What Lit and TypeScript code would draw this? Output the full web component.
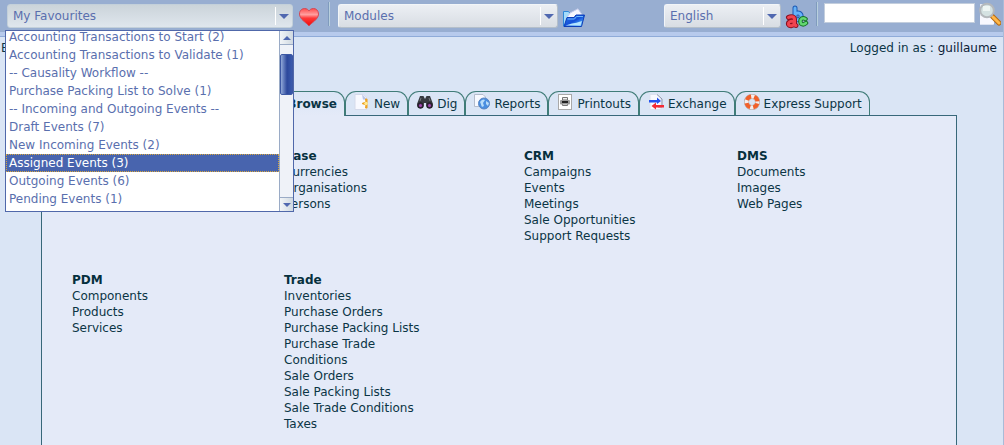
import { LitElement, html, css, svg } from "lit";
import { customElement, state } from "lit/decorators.js";
import { classMap } from "lit/directives/class-map.js";

const heart = svg`<svg width="22" height="20" viewBox="0 0 22 20"><defs><linearGradient id="hg" x1="0" y1="0" x2="0" y2="1"><stop offset="0" stop-color="#ff4a4a"/><stop offset=".35" stop-color="#ffa0a0"/><stop offset=".55" stop-color="#ff3838"/><stop offset="1" stop-color="#f00808"/></linearGradient></defs><path d="M11 19C9 16 1.500 12.500 1.500 7C1.500 3 4.500 1.500 6.500 1.500C9 1.500 10.500 3 11 4C11.500 3 13 1.500 15.500 1.500C18 1.500 20.500 3.500 20.500 7C20.500 12.500 13 16 11 19Z" fill="url(#hg)" stroke="#d04a58"/></svg>`;

const folder = svg`<svg width="24" height="20" viewBox="0 0 24 20"><defs><linearGradient id="fg" x1="0" y1="0" x2="1" y2="1"><stop offset="0" stop-color="#2a78ec"/><stop offset=".5" stop-color="#1450d8"/><stop offset=".75" stop-color="#3f96f4"/><stop offset="1" stop-color="#9adcff"/></linearGradient></defs><path d="M1.500 18V3.500H6.500L8 5.500V18Z" fill="#a4dcfa" stroke="#2f88d8"/><path d="M4 11L8 5L16 .8L21 8L18 13Z" fill="#f7f8ff" stroke="#c4cbea"/><path d="M2 18.500L5 9.500H12L14 7H22.500L19.500 18.500Z" fill="url(#fg)" stroke="#0b3eb8"/><path d="M5.500 11H12.500L14.500 8.500H21" stroke="#6cb8ff" fill="none"/><path d="M3.500 17.500H18.500L20 13Q14 15 10 15.500Z" fill="#b4e4ff"/></svg>`;

const abc = svg`<svg width="24" height="24" viewBox="0 0 24 24" fill="none"><g stroke-linecap="round" stroke-linejoin="round"><path d="M10 3V14M10 9C14 6.500 16.500 9 16 12C15.500 15 12 15.500 10 14" stroke="#1e5ab4" stroke-width="5"/><path d="M10 3V14M10 9C14 6.500 16.500 9 16 12C15.500 15 12 15.500 10 14" stroke="#65b2f8" stroke-width="3"/><path d="M3.500 12.500C6 11 9.500 11.500 9.500 14.500V20L11 20.500M9 16.500C5 15.500 3 17.500 3.500 19.500C4.500 21.500 8 21 9 19" stroke="#8c1020" stroke-width="5"/><path d="M3.500 12.500C6 11 9.500 11.500 9.500 14.500V20L11 20.500M9 16.500C5 15.500 3 17.500 3.500 19.500C4.500 21.500 8 21 9 19" stroke="#f04450" stroke-width="3"/><path d="M20.500 14C17.500 12 15 14 15.500 17C16 20 19 20 21 18" stroke="#187028" stroke-width="4.500"/><path d="M20.500 14C17.500 12 15 14 15.500 17C16 20 19 20 21 18" stroke="#63d870" stroke-width="2.500"/></g></svg>`;

const lens = svg`<svg width="24" height="24" viewBox="0 0 24 24"><path d="M3 2H13L16 5V22.500H3Z" fill="#e6e9f2"/><path d="M3 14H17V22.500H3Z" fill="#f8f8fe"/><path d="M15.500 14.500L22 21" stroke="#b86a10" stroke-width="5" stroke-linecap="round"/><path d="M16 15L22 21" stroke="#ffb84a" stroke-width="3" stroke-linecap="round"/><circle cx="10" cy="8.500" r="6.800" fill="#d5e2e2" stroke="#b4b8bc" stroke-width="2"/><path d="M6 4H13V9H6Z" fill="#eef5f3"/></svg>`;

const newDoc = svg`<svg width="16" height="16" viewBox="0 0 16 16"><path d="M1 .5H9L13 4V15.500H1Z" fill="#f8f9ff" stroke="#d5daea"/><path d="M8 .5L13 5.500H9Z" fill="#b8c4e6"/><path d="M13 5V14H11.500L12 11L8 9.500L12 8L11.500 5Z" fill="#eda224" stroke="#eda224"/><circle cx="12" cy="9.500" r="1.800" fill="#ffe890"/></svg>`;
const dig = svg`<svg width="16" height="16" viewBox="0 0 16 16"><path d="M3 2H6.500L8 5L9.500 2H13L16 10L15 14H10L9 9H7L6 14H1L0 10Z" fill="#383a40"/><path d="M4 4L3 7M12 4L13 7" stroke="#75787e"/><circle cx="3.500" cy="11.500" r="2.800" fill="#38203f" stroke="#202024"/><circle cx="12.500" cy="11.500" r="2.800" fill="#38203f" stroke="#202024"/><circle cx="3.500" cy="11.500" r="1.500" fill="#a04cb0"/><circle cx="12.500" cy="11.500" r="1.500" fill="#a04cb0"/></svg>`;
const reports = svg`<svg width="16" height="16" viewBox="0 0 16 16"><path d="M.5 .5H9L11.500 3V12.500H.5Z" fill="#f7f9ff" stroke="#b4bccc"/><circle cx="10" cy="9.500" r="5.500" fill="#4a8ee0" stroke="#5a86c4"/><path d="M6 8C8 5 10 5 11 6L9 9L10 12L8 13C7 11 7 10 6 8ZM12 7L15 9L14 12L12 10Z" fill="#b8dcfa"/></svg>`;
const printer = svg`<svg width="16" height="16" viewBox="0 0 16 16"><rect x="1.500" y=".5" width="13" height="15" fill="#fff" stroke="#a9a9a9"/><path d="M5.500 3.500H10.500V6H5.500ZM5.500 9.500H10.500V11.500H5.500Z" fill="#eee" stroke="#777"/><rect x="3" y="6" width="10" height="4.500" rx="1" fill="#999"/><path d="M5 8H11" stroke="#222" stroke-width="2"/></svg>`;
const exchange = svg`<svg width="16" height="16" viewBox="0 0 16 16"><path d="M2 .5H10L13 3.500V15.500H2Z" fill="#f8f9ff" stroke="#dde1ee"/><path d="M9 .5L14 5V13H10" fill="none" stroke="#8d96ac"/><path d="M1 6H9V3.500L13 7L9 10V8.500H1Z" fill="#2452f0"/><path d="M16 11H8V8.500L3.500 12L8 15.500V13.500H16Z" fill="#f42a35"/></svg>`;
const buoy = svg`<svg width="16" height="16" viewBox="0 0 16 16"><circle cx="8" cy="8" r="5.500" fill="none" stroke="#a99a98" stroke-width="5"/><circle cx="8" cy="8" r="5.500" fill="none" stroke="#f4eeee" stroke-width="4"/><circle cx="8" cy="8" r="5.500" fill="none" stroke="#f0602a" stroke-width="4" stroke-dasharray="5.500 3.140" stroke-dashoffset="-1.600"/></svg>`;

const favourites = [
  "Accounting Transactions to Start (2)",
  "Accounting Transactions to Validate (1)",
  "-- Causality Workflow --",
  "Purchase Packing List to Solve (1)",
  "-- Incoming and Outgoing Events --",
  "Draft Events (7)",
  "New Incoming Events (2)",
  "Assigned Events (3)",
  "Outgoing Events (6)",
  "Pending Events (1)",
];

const tabs = [
  { label: "New", icon: newDoc },
  { label: "Dig", icon: dig },
  { label: "Reports", icon: reports },
  { label: "Printouts", icon: printer },
  { label: "Exchange", icon: exchange },
  { label: "Express Support", icon: buoy },
];

const groups = [
  { col: 2, title: "Base", items: ["Currencies", "Organisations", "Persons"] },
  { col: 3, title: "CRM", items: ["Campaigns", "Events", "Meetings", "Sale Opportunities", "Support Requests"] },
  { col: 4, title: "DMS", items: ["Documents", "Images", "Web Pages"] },
  { col: 1, title: "PDM", items: ["Components", "Products", "Services"] },
  {
    col: 2,
    title: "Trade",
    items: ["Inventories", "Purchase Orders", "Purchase Packing Lists", "Purchase Trade Conditions", "Sale Orders", "Sale Packing Lists", "Sale Trade Conditions", "Taxes"],
  },
];

@customElement("app-root")
export class AppRoot extends LitElement {
  @state() private selected = 7;

  static styles = css`
    :host { display: flex; flex-direction: column; min-height: 100vh; overflow: hidden; box-sizing: border-box; border-right: 1px solid #a9bbd8; background: #dae5f5; color: #0b3545; font: 12px/16px "DejaVu Sans", sans-serif; }
    * { box-sizing: border-box; }
    a { color: inherit; text-decoration: none; }
    svg { display: block; flex: none; }
    .bar { display: flex; align-items: flex-start; height: 37px; padding: 4px 0 0 7px; background: linear-gradient(#98aed1 32px, #b7caec 32px, #b7caec 36px, #8fabd8 36px); }
    .pick { position: relative; }
    .pick > select { appearance: none; display: block; width: 100%; height: 24px; padding: 0 30px 0 5px; border: 1px solid #f2f5f8; border-right-color: #b4bfca; border-bottom-color: #b4bfca; border-radius: 3px; color: #5a6fae; font: inherit; background: linear-gradient(#eceff4, #d8dde3); }
    .pick.open > select { border-color: #c3d0da; background: linear-gradient(#cbd4da, #dfe6ed); }
    .pick::after { content: ""; position: absolute; right: 4px; top: 10px; border: 5px solid transparent; border-top-color: #5068b0; border-bottom: 0; }
    .pick::before { content: ""; position: absolute; right: 17px; top: 3px; width: 1px; height: 18px; background: #fff; }
    .fav { width: 286px; }
    .modules { width: 220px; margin-left: 8px; }
    .lang { width: 117px; margin-left: auto; }
    .tool { padding: 0; border: 0; background: none; }
    .sep { width: 2px; height: 24px; margin-top: -2px; background: linear-gradient(90deg, #7f9bbd 50%, #b9d0de 50%); }
    .heart { margin: 3px 8px 0 5px; }
    .folder { margin: 4px 0 0 4px; }
    .abc { margin: 1px 7px 0 4px; }
    .lens { margin: -2px 2px 0 2px; }
    .search { width: 151px; height: 20px; margin: -1px 0 0 6px; padding: 0 4px; border: 1px solid #c3cedd; background: #fff; font: inherit; }
    .popup { position: absolute; z-index: 2; left: -2px; top: 26px; width: 289px; height: 182px; display: flex; border: 1px solid #5068aa; background: #fff; }
    .list { flex: 1; display: flex; flex-direction: column; justify-content: flex-end; overflow: hidden; margin: 0; padding: 0 0 3px; list-style: none; color: #5a6fae; }
    .option { flex: none; height: 18px; padding: 0 3px; line-height: 18px; white-space: nowrap; }
    .option.on { background: #4864ae; color: #fff; outline: 1px dotted #d8a63c; outline-offset: -1px; }
    .scroll { width: 14px; display: flex; flex-direction: column; border-left: 1px solid #9aabc6; background: #eff2f8; }
    .arrow { display: grid; place-items: center; height: 14px; padding: 0; border: 0; border-bottom: 1px solid #9aabc6; background: linear-gradient(90deg, #f2f5f8, #cfd8e0); }
    .arrow.down { margin-top: auto; border-top: 1px solid #9aabc6; border-bottom: 0; }
    .thumb { height: 41px; margin-top: 9px; border: 1px solid #3c58a4; border-radius: 2px; background: linear-gradient(90deg, #90a8d8, #2c489c 55%, #3a5aac); }
    .status { display: flex; justify-content: space-between; padding: 3px 6px 0 1px; }
    .user { color: #0a2036; }
    .tabs { display: flex; margin: 35px 47px 0 41px; padding-left: 217px; position: relative; z-index: 1; }
    .tab { display: flex; align-items: center; height: 24px; gap: 4px; padding: 0 7px 0 8px; border: 1px solid #407c78; border-bottom: 0; border-radius: 11px 11px 0 0; background: #dae5f5; font: inherit; color: inherit; white-space: nowrap; }
    .tab svg { margin-bottom: 4px; }
    .tab.active { width: 87px; height: 25px; margin-bottom: -1px; justify-content: flex-end; background: linear-gradient(#dae5f5, #e4eaf8); font-weight: bold; }
    .panel { flex: 1; display: grid; grid-template-columns: 212fr 240fr 213fr 219fr; align-content: start; row-gap: 28px; margin: 0 46px 0 41px; padding: 32px 0 12px 30px; border: 1px solid #38687a; border-bottom: 0; background: #e4eaf8; }
    .title { margin: 0; font-size: 12px; line-height: 16px; color: #06303e; }
    .items { margin: 0; padding: 0; list-style: none; max-width: 150px; }
  `;

  render() {
    return html`
      <header class="bar">
        <div class="pick open fav">
          <select aria-label="Favourites"><option>My Favourites</option></select>
          <div class="popup">
            <ul class="list" role="listbox" aria-label="My Favourites">
              ${favourites.map((f, i) => html`<li role="option" aria-selected=${i === this.selected} class=${classMap({ option: true, on: i === this.selected })} @click=${() => (this.selected = i)}>${f}</li>`)}
            </ul>
            <div class="scroll">
              <button class="arrow" aria-label="Scroll up"><svg width="8" height="4"><path d="M4 0L8 4H0Z" fill="#5068b0"/></svg></button>
              <div class="thumb"></div>
              <button class="arrow down" aria-label="Scroll down"><svg width="8" height="4"><path d="M0 0H8L4 4Z" fill="#5068b0"/></svg></button>
            </div>
          </div>
        </div>
        <button class="tool heart" aria-label="Add to favourites">${heart}</button>
        <span class="sep"></span>
        <div class="pick modules"><select aria-label="Modules"><option>Modules</option></select></div>
        <button class="tool folder" aria-label="Open module">${folder}</button>
        <div class="pick lang"><select aria-label="Language"><option>English</option></select></div>
        <button class="tool abc" aria-label="Change language">${abc}</button>
        <span class="sep"></span>
        <input class="search" type="text" aria-label="Search" />
        <button class="tool lens" aria-label="Search">${lens}</button>
      </header>
      <div class="status"><span>E</span><span>Logged in as : <span class="user">guillaume</span></span></div>
      <nav class="tabs">
        <button class="tab active">Browse</button>
        ${tabs.map((t) => html`<button class="tab">${t.icon}${t.label}</button>`)}
      </nav>
      <main class="panel">
        ${groups.map((g) => html`<section style="grid-column:${g.col}">
          <h2 class="title">${g.title}</h2>
          <ul class="items">${g.items.map((i) => html`<li><a href="#">${i}</a></li>`)}</ul>
        </section>`)}
      </main>
    `;
  }
}
